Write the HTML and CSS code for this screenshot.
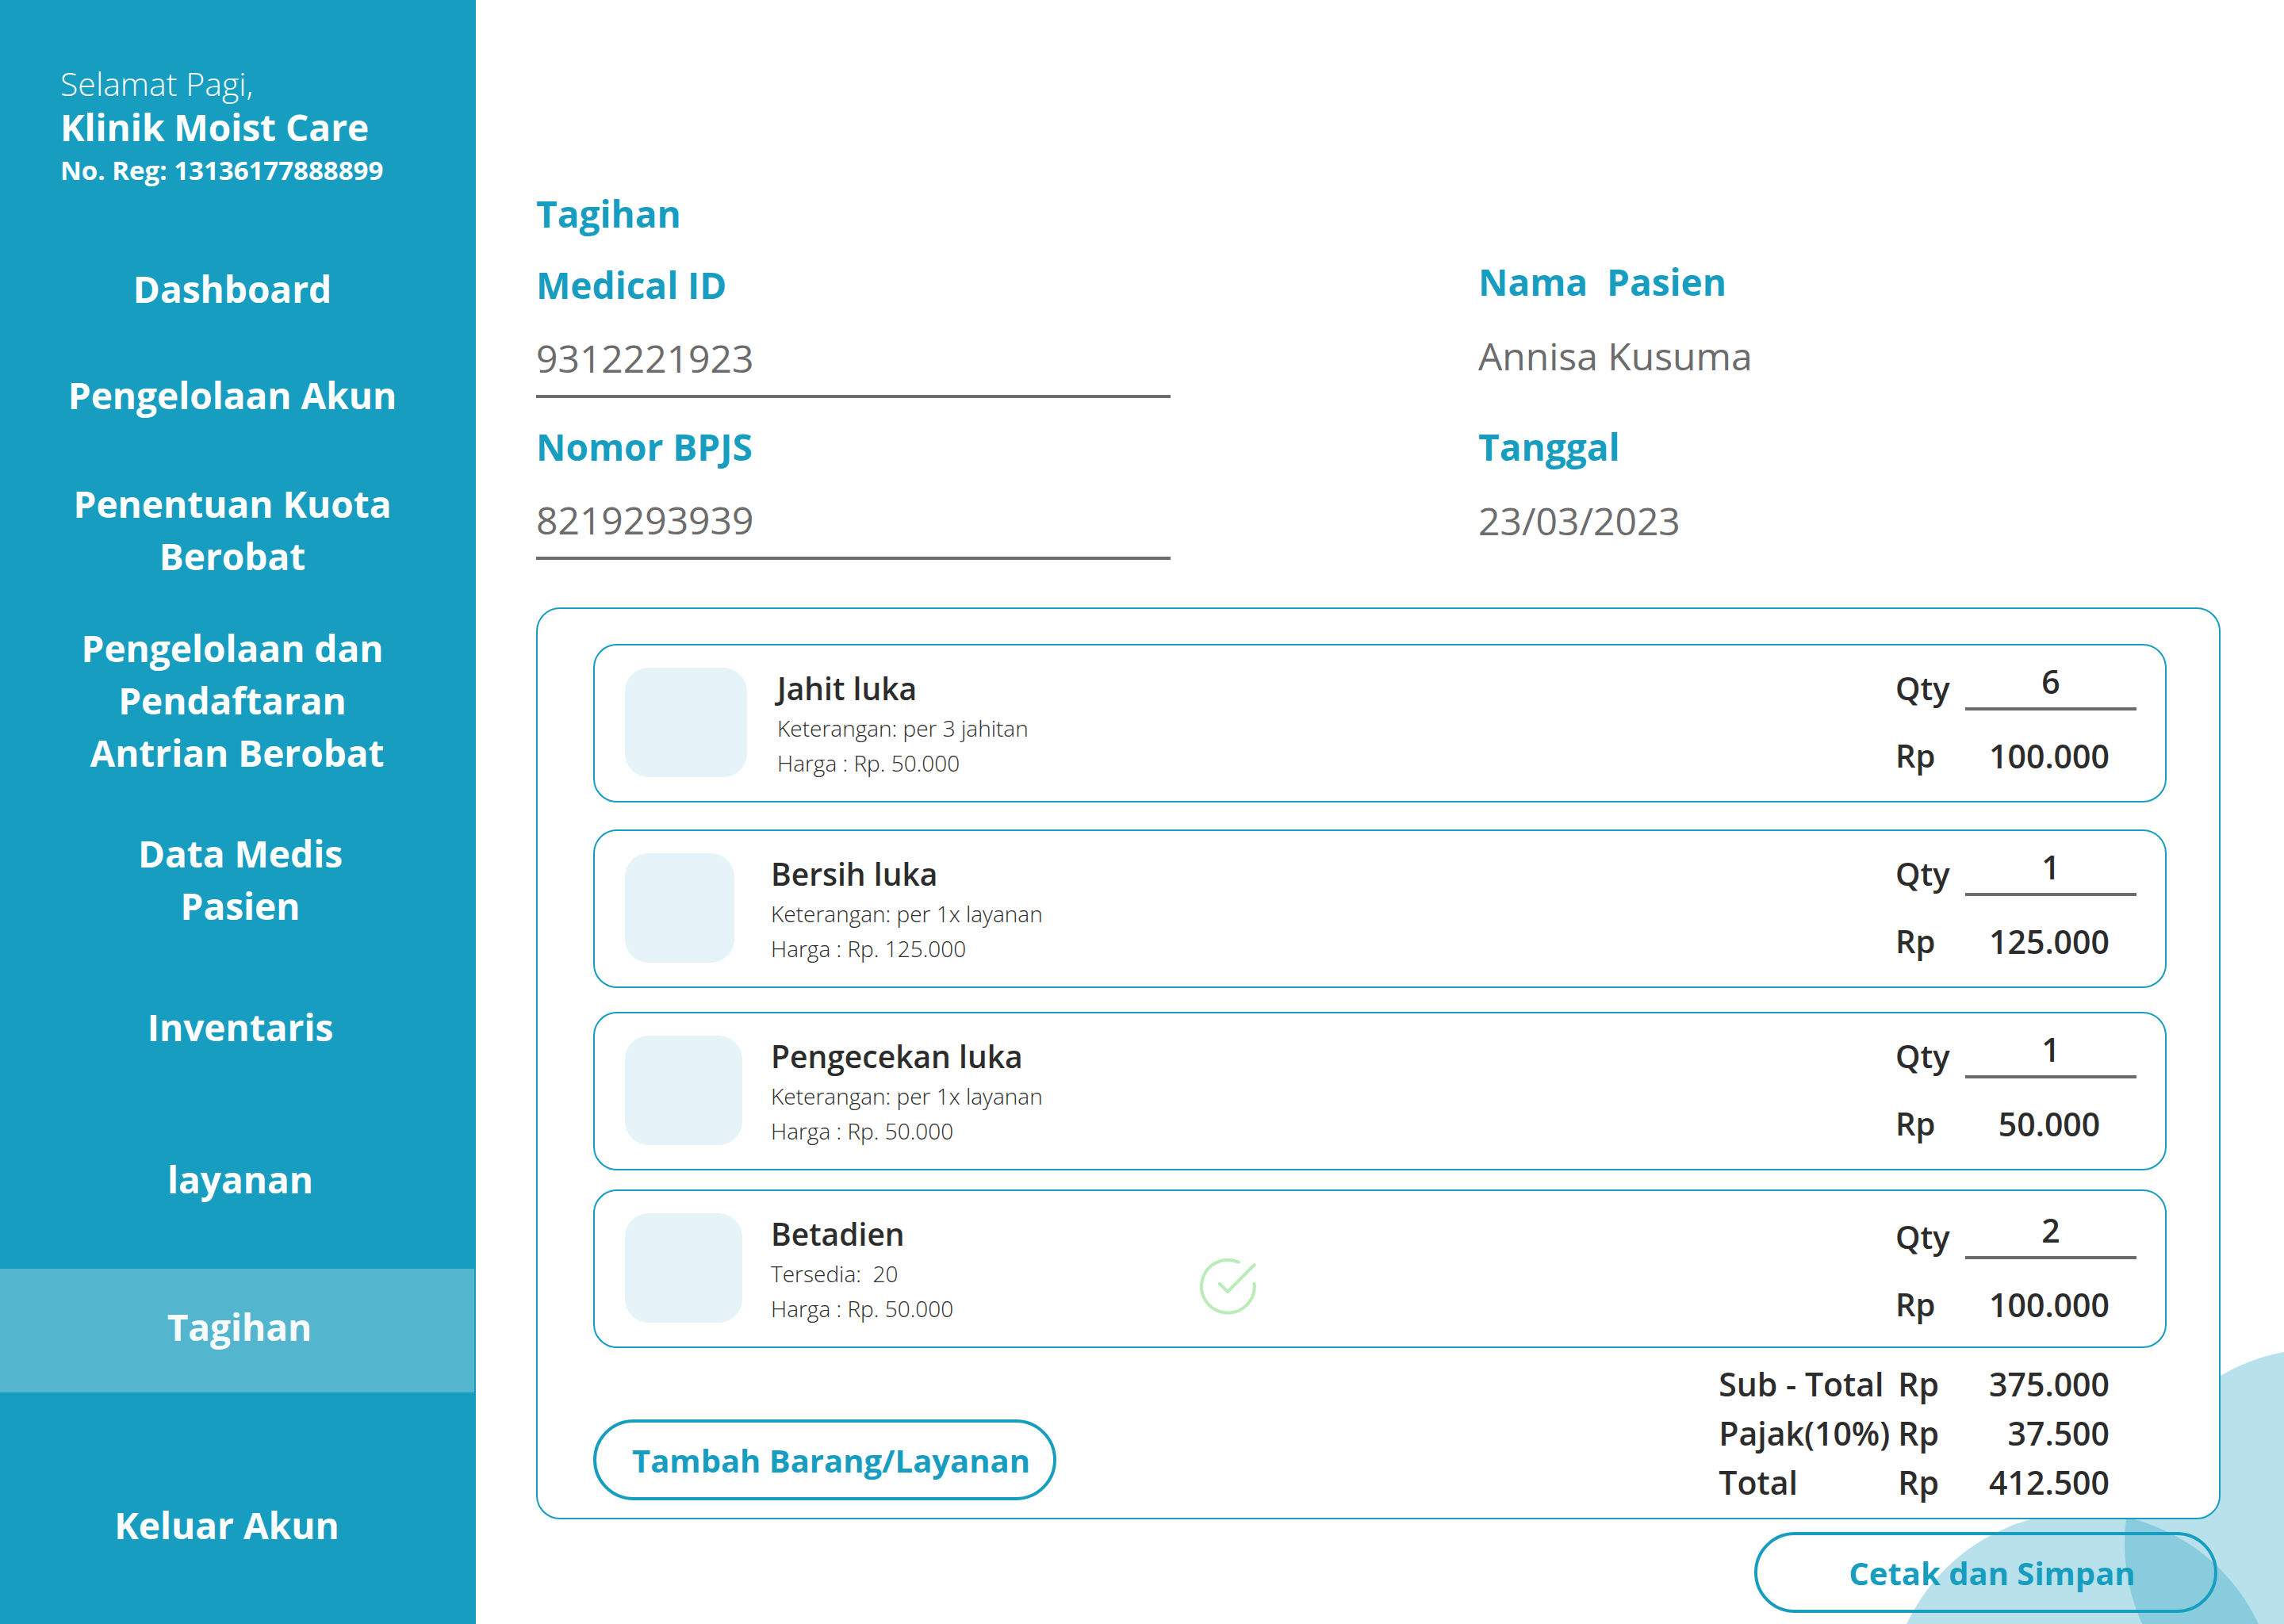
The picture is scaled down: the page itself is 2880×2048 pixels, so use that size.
FILE: index.html
```html
<!DOCTYPE html>
<html lang="id">
<head>
<meta charset="utf-8">
<meta name="viewport" content="width=device-width, initial-scale=1">
<title>Tagihan - Klinik Moist Care</title>
<link rel="stylesheet" href="styles.css">
</head>
<body>
<div class="app">
  <aside class="sidebar">
    <header class="clinic">
      <p class="clinic-greeting">Selamat Pagi,</p>
      <p class="clinic-name">Klinik Moist Care</p>
      <p class="clinic-reg">No. Reg: 13136177888899</p>
    </header>
    <nav class="nav">
      <a class="nav-link" href="#">Dashboard</a>
      <a class="nav-link nav-akun" href="#">Pengelolaan Akun</a>
      <a class="nav-link nav-kuota" href="#">Penentuan Kuota<br>Berobat</a>
      <a class="nav-link nav-antrian" href="#">Pengelolaan dan<br>Pendaftaran<br>&nbsp;Antrian Berobat</a>
      <a class="nav-link nav-wide nav-pasien" href="#">Data Medis<br>Pasien</a>
      <a class="nav-link nav-wide nav-inventaris" href="#">Inventaris</a>
      <a class="nav-link nav-wide nav-layanan" href="#">layanan</a>
      <a class="nav-link nav-wide nav-active" href="#" aria-current="page">Tagihan</a>
      <a class="nav-link nav-keluar" href="#">Keluar Akun</a>
    </nav>
  </aside>

  <main class="main">
    <div class="bubble bubble-right"></div>
    <div class="bubble bubble-bottom"></div>

    <h1 class="title">Tagihan</h1>
    <div class="patient">
      <div class="patient-inputs">
        <div class="field">
          <label class="field-label" for="medical-id">Medical ID</label>
          <input class="field-input" id="medical-id" type="text" value="9312221923">
        </div>
        <div class="field">
          <label class="field-label" for="bpjs">Nomor BPJS</label>
          <input class="field-input" id="bpjs" type="text" value="8219293939">
        </div>
      </div>
      <dl class="patient-facts">
        <div class="fact">
          <dt class="field-label">Nama&nbsp; Pasien</dt>
          <dd class="fact-value">Annisa Kusuma</dd>
        </div>
        <div class="fact">
          <dt class="field-label">Tanggal</dt>
          <dd class="fact-value">23/03/2023</dd>
        </div>
      </dl>
    </div>

    <section class="bill">
      <article class="item item-large">
        <div class="thumb"></div>
        <div class="info">
          <h2 class="info-name">Jahit luka</h2>
          <p class="info-line">Keterangan: per 3 jahitan</p>
          <p class="info-line">Harga : Rp. 50.000</p>
        </div>
        <div class="amount">
          <label class="amount-label" for="qty-1">Qty</label>
          <input class="amount-input" id="qty-1" type="text" inputmode="numeric" value="6">
          <span class="amount-label">Rp</span>
          <span class="amount-value">100.000</span>
        </div>
      </article>

      <article class="item item-small">
        <div class="thumb"></div>
        <div class="info">
          <h2 class="info-name">Bersih luka</h2>
          <p class="info-line">Keterangan: per 1x layanan</p>
          <p class="info-line">Harga : Rp. 125.000</p>
        </div>
        <div class="amount">
          <label class="amount-label" for="qty-2">Qty</label>
          <input class="amount-input" id="qty-2" type="text" inputmode="numeric" value="1">
          <span class="amount-label">Rp</span>
          <span class="amount-value">125.000</span>
        </div>
      </article>

      <article class="item item-check">
        <div class="thumb"></div>
        <div class="info">
          <h2 class="info-name">Pengecekan luka</h2>
          <p class="info-line">Keterangan: per 1x layanan</p>
          <p class="info-line">Harga : Rp. 50.000</p>
        </div>
        <div class="amount">
          <label class="amount-label" for="qty-3">Qty</label>
          <input class="amount-input" id="qty-3" type="text" inputmode="numeric" value="1">
          <span class="amount-label">Rp</span>
          <span class="amount-value">50.000</span>
        </div>
      </article>

      <article class="item item-stock">
        <div class="thumb"></div>
        <div class="info">
          <h2 class="info-name">Betadien</h2>
          <p class="info-line">Tersedia:&nbsp; 20</p>
          <p class="info-line">Harga : Rp. 50.000</p>
        </div>
        <svg class="stock-ok" viewBox="0 0 72 72" role="img" aria-label="Tersedia">
          <path d="M49.7 5.6A33.4 33.4 0 1 0 69.6 32.8M25.8 32.8L36 43L69.6 9.2"/>
        </svg>
        <div class="amount">
          <label class="amount-label" for="qty-4">Qty</label>
          <input class="amount-input" id="qty-4" type="text" inputmode="numeric" value="2">
          <span class="amount-label">Rp</span>
          <span class="amount-value">100.000</span>
        </div>
      </article>

      <div class="bill-footer">
        <button class="button button-add" type="button">Tambah Barang/Layanan</button>
        <table class="totals">
          <tbody>
            <tr><th scope="row">Sub - Total</th><td>Rp</td><td class="totals-value">375.000</td></tr>
            <tr><th scope="row">Pajak(10%)</th><td>Rp</td><td class="totals-value">37.500</td></tr>
            <tr><th scope="row">Total</th><td>Rp</td><td class="totals-value">412.500</td></tr>
          </tbody>
        </table>
      </div>
    </section>

    <div class="actions">
      <button class="button" type="button">Cetak dan Simpan</button>
    </div>
  </main>
</div>
</body>
</html>
```
FILE: styles.css
```css
:root {
  --teal: #179dbf;
  --ink: #2c2c2c;
  --grey: #6c6c6c;
}

* {
  box-sizing: border-box;
}

body {
  margin: 0;
  background: #fff;
  color: var(--ink);
  font-family: "Open Sans", "Noto Sans", sans-serif;
}

h1, h2, p, dl, dd {
  margin: 0;
}

.app {
  display: flex;
  min-height: 100vh;
}

/* Sidebar */

.sidebar {
  flex: 0 0 600px;
  padding-top: 78px;
  background: var(--teal);
  color: #fff;
}

.clinic {
  padding-left: 76px;
}

.clinic-greeting {
  font-size: 41px;
  font-weight: 300;
  line-height: 54px;
}

.clinic-name {
  font-size: 46px;
  font-weight: 700;
  line-height: 56px;
}

.clinic-reg {
  font-size: 33px;
  font-weight: 700;
  line-height: 54px;
}

.nav {
  display: flex;
  flex-direction: column;
  padding-top: 89px;
}

.nav-link {
  padding-right: 14px;
  color: #fff;
  font-size: 46px;
  font-weight: 700;
  line-height: 66px;
  text-align: center;
  text-decoration: none;
}

.nav-wide { padding: 0 0 0 6px; }
.nav-akun { margin-top: 68px; }
.nav-kuota { margin-top: 71px; }
.nav-antrian { margin-top: 50px; }
.nav-pasien { margin-top: 61px; }
.nav-inventaris { margin-top: 87px; }
.nav-layanan { margin-top: 126px; }

.nav-active {
  margin: 80px 2px 0 0;
  padding: 40px 0 50px 6px;
  background: #54b5ce;
  color: #f8fbfc;
}

.nav-keluar {
  margin-top: 134px;
  padding-right: 28px;
}

/* Main column */

.main {
  position: relative;
  flex: 1;
  min-width: 0;
  padding: 236px 80px 14px 76px;
  overflow: hidden;
}

.bubble {
  position: absolute;
  width: 490px;
  height: 490px;
  border-radius: 50%;
  background: rgba(23, 157, 189, 0.3);
}

.bubble-right {
  right: -289px;
  bottom: -143px;
}

.bubble-bottom {
  right: 9px;
  bottom: -349px;
}

.title {
  margin-bottom: 20px;
  color: var(--teal);
  font-size: 46px;
  font-weight: 700;
  line-height: 66px;
}

.patient {
  display: grid;
  grid-template-columns: 1188fr 936fr;
}

.patient-inputs {
  display: flex;
  flex-direction: column;
  gap: 28px;
  max-width: 800px;
  padding-top: 4px;
}

.patient-facts {
  display: flex;
  flex-direction: column;
  gap: 48px;
}

.field,
.fact {
  display: flex;
  flex-direction: column;
}

.field { gap: 26px; }
.fact { gap: 28px; }

.field-label {
  color: var(--teal);
  font-size: 46px;
  font-weight: 700;
  line-height: 66px;
}

.field-input {
  width: 100%;
  height: 84px;
  padding: 0 0 14px;
  border: 0;
  border-bottom: 4px solid var(--grey);
  background: transparent;
  color: var(--grey);
  font: 400 48px/66px "Open Sans", "Noto Sans", sans-serif;
}

.fact-value {
  color: var(--grey);
  font-size: 48px;
  line-height: 66px;
}

/* Bill */

.bill {
  position: relative;
  margin-top: 60px;
  padding: 44px 66px 14px 70px;
  border: 2px solid var(--teal);
  border-radius: 30px;
  background: #fff;
}

.item {
  display: grid;
  grid-template-columns: 184px 540px 1fr auto;
  min-height: 200px;
  padding: 0 36px 0 38px;
  border: 2px solid var(--teal);
  border-radius: 30px;
}

.item-large { grid-template-columns: 192px 540px 1fr auto; }
.item-small { margin-top: 34px; }
.item-check { margin-top: 30px; }
.item-stock { margin-top: 24px; }

.thumb {
  width: 148px;
  height: 138px;
  margin-top: 28px;
  border-radius: 30px;
  background: #e6f4f9;
}

.item-large .thumb { width: 154px; }
.item-small .thumb { width: 138px; }

.info {
  padding-top: 26px;
}

.info-name {
  font-size: 39px;
  font-weight: 600;
  line-height: 56px;
}

.info-line {
  font-size: 28px;
  font-weight: 300;
  line-height: 44px;
}

.stock-ok {
  width: 72px;
  height: 72px;
  margin-top: 84px;
  fill: none;
  stroke: #b9ecb9;
  stroke-width: 4;
  stroke-linecap: round;
  stroke-linejoin: round;
}

.amount {
  display: grid;
  grid-column: 4;
  grid-template-columns: 88px 216px;
  grid-template-rows: 64px 56px;
  row-gap: 29px;
  align-items: end;
  padding-top: 18px;
  font-size: 41px;
  font-weight: 600;
  line-height: 56px;
}

.item-stock .amount { padding-top: 22px; }

.amount-label {
  font-size: 40px;
}

.amount-input {
  width: 100%;
  height: 64px;
  padding: 0 0 6px;
  border: 0;
  border-bottom: 4px solid var(--grey);
  background: transparent;
  color: var(--ink);
  font: 600 41px/54px "Open Sans", "Noto Sans", sans-serif;
  text-align: center;
}

.amount-value {
  padding-right: 4px;
  text-align: center;
}

.bill-footer {
  display: flex;
  align-items: flex-start;
  justify-content: space-between;
  padding: 14px 72px 0 0;
}

.totals {
  border-collapse: collapse;
  font-size: 41px;
  font-weight: 600;
  line-height: 62px;
}

.totals th,
.totals td {
  padding: 0;
  font-weight: 600;
  text-align: left;
}

.totals th {
  width: 226px;
}

.totals .totals-value {
  width: 215px;
  text-align: right;
}

.button {
  width: 584px;
  height: 102px;
  padding: 2px 0 0 16px;
  border: 4px solid var(--teal);
  border-radius: 51px;
  background: transparent;
  color: var(--teal);
  font: 700 40px/56px "Open Sans", "Noto Sans", sans-serif;
}

.button-add {
  margin-top: 76px;
}

.actions {
  position: relative;
  display: flex;
  justify-content: flex-end;
  padding: 16px 4px 0 0;
}
```
